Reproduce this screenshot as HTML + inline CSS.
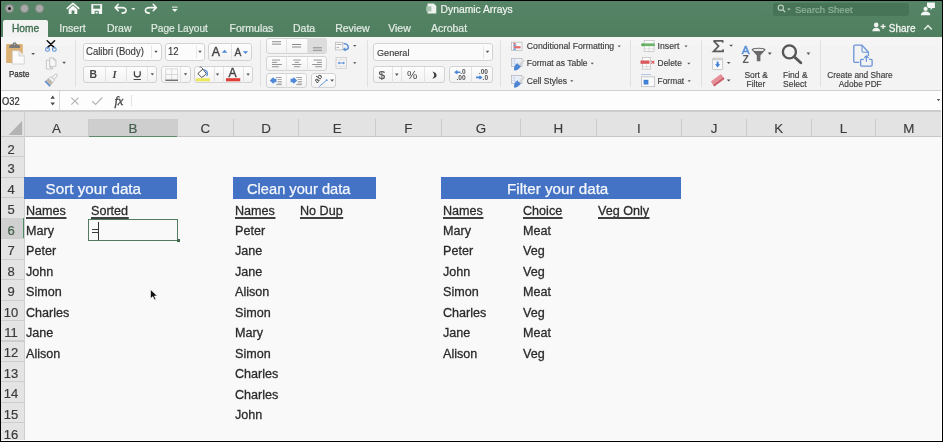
<!DOCTYPE html>
<html><head><meta charset="utf-8"><style>
*{margin:0;padding:0;box-sizing:border-box}
html,body{width:943px;height:442px;overflow:hidden;background:#f9f9f9;font-family:"Liberation Sans",sans-serif;position:relative}
.a{position:absolute}
.t{position:absolute;white-space:nowrap;line-height:normal}
.tab{position:absolute;top:22px;font-size:10.5px;color:#e2ebe4;white-space:nowrap;-webkit-text-stroke:0.2px currentColor}
.ch{position:absolute;font-size:13.4px;color:#3a3a3a;white-space:nowrap;-webkit-text-stroke:0.12px #3a3a3a}
.rn{position:absolute;left:0;width:22px;font-size:13px;color:#3a3a3a;-webkit-text-stroke:0.2px #3a3a3a;text-align:center;white-space:nowrap}
.c{position:absolute;font-size:13.7px;color:#2a2a2a;white-space:nowrap;line-height:15px;transform:scaleX(0.92);transform-origin:0 0;-webkit-text-stroke:0.3px #2a2a2a}
.u::after{content:'';position:absolute;left:-0.3px;right:-0.3px;top:13.6px;height:1.5px;background:#414141}
.band{position:absolute;top:177.3px;height:22px;background:#4472c4}
.bt{position:absolute;color:#f4f7fc;font-size:15.2px;line-height:17px;white-space:nowrap;-webkit-text-stroke:0.25px #f4f7fc;transform-origin:0 0}
.sl{position:absolute;font-size:8.5px;color:#3b3b3b;white-space:nowrap;line-height:10px;-webkit-text-stroke:0.15px #3b3b3b}
.btn{position:absolute;background:linear-gradient(#fdfdfd,#f3f3f3);border:1px solid #d3d3d3;border-radius:3px}
.sep{position:absolute;top:40px;width:1px;height:47px;background:#e0e0e0}
.dd{position:absolute;width:0;height:0;border-left:2.5px solid transparent;border-right:2.5px solid transparent;border-top:3px solid #4a4a4a}
svg{position:absolute;overflow:visible}
</style></head><body>
<div id="root" style="position:absolute;left:0;top:0;width:943px;height:442px;overflow:hidden;will-change:transform;background:#f9f9f9">
<div class="a" style="left:0;top:0;width:943px;height:37px;background:linear-gradient(#558566,#4f7f5f)"></div>
<div class="a" style="left:4.6px;top:4.1px;width:9.2px;height:9.2px;border-radius:50%;background:#a9a9a9;border:0.9px solid #858a86"></div>
<div class="a" style="left:19.799999999999997px;top:4.1px;width:9.2px;height:9.2px;border-radius:50%;background:#a9a9a9;border:0.9px solid #858a86"></div>
<div class="a" style="left:34.8px;top:4.1px;width:9.2px;height:9.2px;border-radius:50%;background:#a9a9a9;border:0.9px solid #858a86"></div>
<div class="a" style="left:7.6px;top:7.1px;width:3.2px;height:3.2px;border-radius:50%;background:#1a1a1a"></div>
<div class="t" style="left:440.6px;top:4.1px;font-size:10.3px;color:#f2f5f3;-webkit-text-stroke:0.2px #f2f5f3">Dynamic Arrays</div>
<div class="a" style="left:773px;top:3px;width:136px;height:12.5px;background:#477457;border-radius:3px"></div>
<div class="t" style="left:794.5px;top:3.6px;font-size:9.8px;color:#93b49e;-webkit-text-stroke:0.15px #93b49e;transform:scaleX(0.97);transform-origin:0 0">Search Sheet</div>
<div class="a" style="left:3px;top:20px;width:45px;height:17px;background:#f3f3f3;border-radius:2px 2px 0 0"></div>
<div class="tab" style="left:12px;color:#3d6e4e;transform:scaleX(0.97);transform-origin:0 0;-webkit-text-stroke:0.35px #3d6e4e;">Home</div>
<div class="tab" style="left:59.3px;color:#e2ebe4;">Insert</div>
<div class="tab" style="left:107px;color:#e2ebe4;">Draw</div>
<div class="tab" style="left:151.4px;color:#e2ebe4;transform:scaleX(0.965);transform-origin:0 0;">Page Layout</div>
<div class="tab" style="left:229.6px;color:#e2ebe4;">Formulas</div>
<div class="tab" style="left:293px;color:#e2ebe4;">Data</div>
<div class="tab" style="left:335.2px;color:#e2ebe4;">Review</div>
<div class="tab" style="left:388.2px;color:#e2ebe4;">View</div>
<div class="tab" style="left:430.9px;color:#e2ebe4;">Acrobat</div>
<div class="tab" style="left:888.8px;font-size:10px;top:22.5px;color:#f0f5f1;-webkit-text-stroke:0.3px #f0f5f1">Share</div>
<div class="a" style="left:0;top:37px;width:943px;height:54px;background:linear-gradient(#f5f5f5 0,#f5f5f5 9px,#f3f3f3 10px);border-bottom:1.8px solid #d0d0d0"></div>
<div class="sep" style="left:75.2px"></div>
<div class="sep" style="left:260px"></div>
<div class="sep" style="left:366.5px"></div>
<div class="sep" style="left:500px"></div>
<div class="sep" style="left:630.2px"></div>
<div class="sep" style="left:700.7px"></div>
<div class="sep" style="left:820.2px"></div>
<div class="btn" style="left:82.5px;top:43px;width:79px;height:17.6px;background:#fcfcfc"></div>
<div class="a" style="left:151px;top:46px;width:1px;height:12px;background:#e6e6e6"></div>
<div class="t" style="left:85.8px;top:45.8px;font-size:10.4px;color:#3a3a3a;transform:scaleX(0.92);transform-origin:0 0;-webkit-text-stroke:0.15px #3a3a3a">Calibri (Body)</div>
<div class="btn" style="left:165px;top:43px;width:39.6px;height:17.6px;background:#fcfcfc"></div>
<div class="a" style="left:195.5px;top:46px;width:1px;height:12px;background:#e6e6e6"></div>
<div class="t" style="left:168.4px;top:45.8px;font-size:10.4px;color:#3a3a3a;transform:scaleX(0.92);transform-origin:0 0;-webkit-text-stroke:0.15px #3a3a3a">12</div>
<div class="btn" style="left:208.4px;top:43px;width:44px;height:17.6px"></div>
<div class="a" style="left:230.5px;top:44px;width:1px;height:16px;background:#e3e3e3"></div>
<div class="btn" style="left:82.5px;top:66.2px;width:74px;height:17.2px"></div>
<div class="a" style="left:104.6px;top:67px;width:1px;height:16px;background:#e3e3e3"></div>
<div class="a" style="left:126.4px;top:67px;width:1px;height:16px;background:#e3e3e3"></div>
<div class="a" style="left:146.5px;top:67px;width:1px;height:16px;background:#e3e3e3"></div>
<div class="btn" style="left:160.6px;top:66.2px;width:30px;height:17.2px"></div>
<div class="a" style="left:179.8px;top:67px;width:1px;height:16px;background:#e3e3e3"></div>
<div class="btn" style="left:193.9px;top:66.2px;width:58.8px;height:17.2px"></div>
<div class="a" style="left:213.6px;top:67px;width:1px;height:16px;background:#e3e3e3"></div>
<div class="a" style="left:222.7px;top:67px;width:1px;height:16px;background:#e3e3e3"></div>
<div class="a" style="left:243.2px;top:67px;width:1px;height:16px;background:#e3e3e3"></div>
<div class="btn" style="left:265.8px;top:37.9px;width:61.7px;height:15.7px"></div>
<div class="a" style="left:307.2px;top:38.4px;width:20px;height:14.7px;background:#dcdcdc;border-radius:0 3px 3px 0"></div>
<div class="a" style="left:286px;top:38.5px;width:1px;height:14.5px;background:#e3e3e3"></div>
<div class="a" style="left:307.2px;top:38.5px;width:1px;height:14.5px;background:#e3e3e3"></div>
<div class="btn" style="left:265.8px;top:55.7px;width:61.7px;height:15.3px"></div>
<div class="a" style="left:286px;top:56.2px;width:1px;height:14.5px;background:#e3e3e3"></div>
<div class="a" style="left:307.2px;top:56.2px;width:1px;height:14.5px;background:#e3e3e3"></div>
<div class="btn" style="left:265.8px;top:73.3px;width:41.2px;height:14.9px"></div>
<div class="a" style="left:286px;top:73.8px;width:1px;height:14px;background:#e3e3e3"></div>
<div class="btn" style="left:311px;top:73.3px;width:25.4px;height:14.9px"></div>
<div class="btn" style="left:373.2px;top:42.8px;width:120.2px;height:17.8px;background:#fbfbfb"></div>
<div class="a" style="left:483px;top:45.5px;width:1px;height:13px;background:#e6e6e6"></div>
<div class="t" style="left:376.7px;top:46.6px;font-size:9.8px;color:#3a3a3a;-webkit-text-stroke:0.15px #3a3a3a;transform:scaleX(0.93);transform-origin:0 0">General</div>
<div class="btn" style="left:373.2px;top:66.1px;width:72px;height:17.4px"></div>
<div class="a" style="left:391.7px;top:67px;width:1px;height:16px;background:#e3e3e3"></div>
<div class="a" style="left:401.4px;top:67px;width:1px;height:16px;background:#e3e3e3"></div>
<div class="a" style="left:423.6px;top:67px;width:1px;height:16px;background:#e3e3e3"></div>
<div class="btn" style="left:449.3px;top:66.1px;width:43.7px;height:17.4px"></div>
<div class="a" style="left:471.1px;top:67px;width:1px;height:16px;background:#e3e3e3"></div>
<div class="sl" style="left:526.8px;top:41.2px;font-size:8.7px">Conditional Formatting</div>
<div class="sl" style="left:526.8px;top:58.4px;font-size:8.5px">Format as Table</div>
<div class="sl" style="left:526.8px;top:76px;font-size:8.5px">Cell Styles</div>
<div class="sl" style="left:657.6px;top:41.2px;font-size:8.7px">Insert</div>
<div class="sl" style="left:657.6px;top:58.4px;font-size:8.4px">Delete</div>
<div class="sl" style="left:657.6px;top:76px;font-size:8.4px">Format</div>
<div class="sl" style="left:744.4px;top:70px;font-size:8.5px">Sort &amp;</div>
<div class="sl" style="left:746.5px;top:78.6px;font-size:8.5px">Filter</div>
<div class="sl" style="left:783px;top:70px;font-size:8.5px">Find &amp;</div>
<div class="sl" style="left:783px;top:78.6px;font-size:8.5px">Select</div>
<div class="sl" style="left:827.2px;top:70px;font-size:8.3px">Create and Share</div>
<div class="sl" style="left:838.8px;top:78.6px;font-size:8.3px">Adobe PDF</div>
<div class="sl" style="left:8.8px;top:69.3px;font-size:8.3px;color:#333;-webkit-text-stroke:0.25px #333;transform:scaleX(0.96);transform-origin:0 0">Paste</div>
<div class="a" style="left:0;top:91px;width:943px;height:19px;background:#fdfdfd"></div>
<div class="t" style="left:2.3px;top:95.6px;font-size:10px;color:#2e2e2e;-webkit-text-stroke:0.2px #2e2e2e;transform:scaleX(0.93);transform-origin:0 0">O32</div>
<div class="a" style="left:59px;top:91px;width:1px;height:19px;background:#d9d9d9"></div>
<div class="a" style="left:131px;top:95px;width:1px;height:11px;background:#e2e2e2"></div>
<div class="a" style="left:0;top:110px;width:943px;height:27.2px;background:#e3e3e3;border-top:2.4px solid #cdcdcd;border-bottom:1.4px solid #c6c6c6"></div>
<svg style="left:0;top:0" width="943" height="442"><polygon points="8.6,134.9 22.2,120.8 22.2,134.9" fill="#b3b3b3"/></svg>
<div class="a" style="left:23.5px;top:111px;width:1px;height:330px;background:#cfcfcf"></div>
<div class="a" style="left:89.1px;top:118.6px;width:87.90000000000002px;height:18.2px;background:#cecece;border-bottom:1.3px solid #5a8a68"></div>
<div class="ch" style="left:36.4px;width:40px;text-align:center;top:121.4px;color:#3a3a3a">A</div>
<div class="a" style="left:88.3px;top:118.5px;width:1px;height:18.5px;background:#cbcbcb"></div>
<div class="ch" style="left:113.05000000000001px;width:40px;text-align:center;top:121.4px;color:#41614c">B</div>
<div class="a" style="left:176.8px;top:118.5px;width:1px;height:18.5px;background:#cbcbcb"></div>
<div class="ch" style="left:185.3px;width:40px;text-align:center;top:121.4px;color:#3a3a3a">C</div>
<div class="a" style="left:232.8px;top:118.5px;width:1px;height:18.5px;background:#cbcbcb"></div>
<div class="ch" style="left:246.0px;width:40px;text-align:center;top:121.4px;color:#3a3a3a">D</div>
<div class="a" style="left:298.2px;top:118.5px;width:1px;height:18.5px;background:#cbcbcb"></div>
<div class="ch" style="left:317.15px;width:40px;text-align:center;top:121.4px;color:#3a3a3a">E</div>
<div class="a" style="left:375.1px;top:118.5px;width:1px;height:18.5px;background:#cbcbcb"></div>
<div class="ch" style="left:388.45000000000005px;width:40px;text-align:center;top:121.4px;color:#3a3a3a">F</div>
<div class="a" style="left:440.8px;top:118.5px;width:1px;height:18.5px;background:#cbcbcb"></div>
<div class="ch" style="left:461.0px;width:40px;text-align:center;top:121.4px;color:#3a3a3a">G</div>
<div class="a" style="left:520.2px;top:118.5px;width:1px;height:18.5px;background:#cbcbcb"></div>
<div class="ch" style="left:538.35px;width:40px;text-align:center;top:121.4px;color:#3a3a3a">H</div>
<div class="a" style="left:595.5px;top:118.5px;width:1px;height:18.5px;background:#cbcbcb"></div>
<div class="ch" style="left:618.85px;width:40px;text-align:center;top:121.4px;color:#3a3a3a">I</div>
<div class="a" style="left:681.2px;top:118.5px;width:1px;height:18.5px;background:#cbcbcb"></div>
<div class="ch" style="left:694.0px;width:40px;text-align:center;top:121.4px;color:#3a3a3a">J</div>
<div class="a" style="left:745.8px;top:118.5px;width:1px;height:18.5px;background:#cbcbcb"></div>
<div class="ch" style="left:758.65px;width:40px;text-align:center;top:121.4px;color:#3a3a3a">K</div>
<div class="a" style="left:810.5px;top:118.5px;width:1px;height:18.5px;background:#cbcbcb"></div>
<div class="ch" style="left:823.45px;width:40px;text-align:center;top:121.4px;color:#3a3a3a">L</div>
<div class="a" style="left:875.4px;top:118.5px;width:1px;height:18.5px;background:#cbcbcb"></div>
<div class="ch" style="left:888.95px;width:40px;text-align:center;top:121.4px;color:#3a3a3a">M</div>
<div class="a" style="left:0;top:137px;width:23.5px;height:305px;background:#e4e4e4"></div>
<div class="a" style="left:0;top:156.4px;width:23.5px;height:1.1px;background:#cdcdcd"></div>
<div class="rn" style="top:141.70000000000002px;color:#3c3c3c">2</div>
<div class="a" style="left:0;top:176.85px;width:23.5px;height:1.1px;background:#cdcdcd"></div>
<div class="rn" style="top:161.4px;color:#3c3c3c">3</div>
<div class="a" style="left:0;top:197.3px;width:23.5px;height:1.1px;background:#cdcdcd"></div>
<div class="rn" style="top:181.85px;color:#3c3c3c">4</div>
<div class="a" style="left:0;top:217.75px;width:23.5px;height:1.1px;background:#cdcdcd"></div>
<div class="rn" style="top:202.3px;color:#3c3c3c">5</div>
<div class="a" style="left:0;top:218.35px;width:23.5px;height:20.45px;background:#d0d0d0"></div>
<div class="a" style="left:22.8px;top:218.35px;width:1.4px;height:20.45px;background:#4c8a5f"></div>
<div class="a" style="left:0;top:238.20000000000002px;width:23.5px;height:1.1px;background:#cdcdcd"></div>
<div class="rn" style="top:222.75px;color:#3f6e4e">6</div>
<div class="a" style="left:0;top:258.65px;width:23.5px;height:1.1px;background:#cdcdcd"></div>
<div class="rn" style="top:243.20000000000002px;color:#3c3c3c">7</div>
<div class="a" style="left:0;top:279.09999999999997px;width:23.5px;height:1.1px;background:#cdcdcd"></div>
<div class="rn" style="top:263.65px;color:#3c3c3c">8</div>
<div class="a" style="left:0;top:299.54999999999995px;width:23.5px;height:1.1px;background:#cdcdcd"></div>
<div class="rn" style="top:284.09999999999997px;color:#3c3c3c">9</div>
<div class="a" style="left:0;top:320.0px;width:23.5px;height:1.1px;background:#cdcdcd"></div>
<div class="rn" style="top:304.54999999999995px;color:#3c3c3c">10</div>
<div class="a" style="left:0;top:340.44999999999993px;width:23.5px;height:1.1px;background:#cdcdcd"></div>
<div class="rn" style="top:325.0px;color:#3c3c3c">11</div>
<div class="a" style="left:0;top:360.9px;width:23.5px;height:1.1px;background:#cdcdcd"></div>
<div class="rn" style="top:345.44999999999993px;color:#3c3c3c">12</div>
<div class="a" style="left:0;top:381.34999999999997px;width:23.5px;height:1.1px;background:#cdcdcd"></div>
<div class="rn" style="top:365.9px;color:#3c3c3c">13</div>
<div class="a" style="left:0;top:401.79999999999995px;width:23.5px;height:1.1px;background:#cdcdcd"></div>
<div class="rn" style="top:386.34999999999997px;color:#3c3c3c">14</div>
<div class="a" style="left:0;top:422.24999999999994px;width:23.5px;height:1.1px;background:#cdcdcd"></div>
<div class="rn" style="top:406.79999999999995px;color:#3c3c3c">15</div>
<div class="a" style="left:0;top:442.7px;width:23.5px;height:1.1px;background:#cdcdcd"></div>
<div class="rn" style="top:427.24999999999994px;color:#3c3c3c">16</div>
<div class="band" style="left:24px;width:153.3px"></div>
<div class="band" style="left:233.3px;width:142.3px"></div>
<div class="band" style="left:440.5px;width:240.5px"></div>
<div class="bt" style="left:45.6px;top:179.6px">Sort your data</div>
<div class="bt" style="left:247px;top:179.6px;transform:scaleX(0.965)">Clean your data</div>
<div class="bt" style="left:507px;top:179.6px">Filter your data</div>
<div class="c u" style="left:26.1px;top:203.45000000000002px;">Names</div>
<div class="c u" style="left:90.89999999999999px;top:203.45000000000002px;">Sorted</div>
<div class="c" style="left:26.1px;top:222.9px;">Mary</div>
<div class="c" style="left:26.1px;top:243.35000000000002px;">Peter</div>
<div class="c" style="left:26.1px;top:263.8px;">John</div>
<div class="c" style="left:26.1px;top:284.25px;">Simon</div>
<div class="c" style="left:26.1px;top:304.7px;">Charles</div>
<div class="c" style="left:26.1px;top:325.15000000000003px;">Jane</div>
<div class="c" style="left:26.1px;top:345.59999999999997px;">Alison</div>
<div class="c u" style="left:235.4px;top:203.45000000000002px;">Names</div>
<div class="c u" style="left:299.8px;top:203.45000000000002px;">No Dup</div>
<div class="c" style="left:235.4px;top:222.9px;">Peter</div>
<div class="c" style="left:235.4px;top:243.35000000000002px;">Jane</div>
<div class="c" style="left:235.4px;top:263.8px;">Jane</div>
<div class="c" style="left:235.4px;top:284.25px;">Alison</div>
<div class="c" style="left:235.4px;top:304.7px;">Simon</div>
<div class="c" style="left:235.4px;top:325.15000000000003px;">Mary</div>
<div class="c" style="left:235.4px;top:345.59999999999997px;">Simon</div>
<div class="c" style="left:235.4px;top:366.05px;">Charles</div>
<div class="c" style="left:235.4px;top:386.5px;">Charles</div>
<div class="c" style="left:235.4px;top:406.95px;">John</div>
<div class="c u" style="left:443.40000000000003px;top:203.45000000000002px;">Names</div>
<div class="c u" style="left:522.8000000000001px;top:203.45000000000002px;">Choice</div>
<div class="c u" style="left:598.1px;top:203.45000000000002px;">Veg Only</div>
<div class="c" style="left:443.40000000000003px;top:222.9px;">Mary</div>
<div class="c" style="left:443.40000000000003px;top:243.35000000000002px;">Peter</div>
<div class="c" style="left:443.40000000000003px;top:263.8px;">John</div>
<div class="c" style="left:443.40000000000003px;top:284.25px;">Simon</div>
<div class="c" style="left:443.40000000000003px;top:304.7px;">Charles</div>
<div class="c" style="left:443.40000000000003px;top:325.15000000000003px;">Jane</div>
<div class="c" style="left:443.40000000000003px;top:345.59999999999997px;">Alison</div>
<div class="c" style="left:522.8000000000001px;top:222.9px;">Meat</div>
<div class="c" style="left:522.8000000000001px;top:243.35000000000002px;">Veg</div>
<div class="c" style="left:522.8000000000001px;top:263.8px;">Veg</div>
<div class="c" style="left:522.8000000000001px;top:284.25px;">Meat</div>
<div class="c" style="left:522.8000000000001px;top:304.7px;">Veg</div>
<div class="c" style="left:522.8000000000001px;top:325.15000000000003px;">Meat</div>
<div class="c" style="left:522.8000000000001px;top:345.59999999999997px;">Veg</div>
<div class="a" style="left:88px;top:219px;width:90.20000000000002px;height:22.3px;border:1.8px solid #527c60"></div>
<div class="a" style="left:176.70000000000002px;top:238.8px;width:3px;height:3px;background:#3f6a4e"></div>
<div class="a" style="left:92.2px;top:229.2px;width:5.4px;height:1.3px;background:#3c3c3c"></div>
<div class="a" style="left:92.2px;top:232px;width:5.4px;height:1.3px;background:#3c3c3c"></div>
<div class="a" style="left:98.1px;top:221.8px;width:1.3px;height:18px;background:#333"></div>
<svg style="left:150.2px;top:289.2px" width="10" height="14"><path d="M0.5,0.5 L0.5,9.5 L2.8,7.6 L4.6,11 L6,10.3 L4.3,7 L7.3,7 Z" fill="#111" stroke="#fff" stroke-width="0.6"/></svg>

<svg style="left:0;top:0" width="943" height="442" viewBox="0 0 943 442">
<!-- title bar icons -->
<g fill="none" stroke="#f4f7f5" stroke-width="1.55" stroke-linecap="round" stroke-linejoin="round">
  <path d="M67.2,8.4 L73,3.3 L78.8,8.4"/>
  <path d="M115.2,7.6 L118.3,4.3 M115.2,7.6 L118.3,10.8 M115.5,7.6 L122,7.6 C125.6,7.6 126.3,9.5 126.1,10.6 C125.9,12.2 124.5,13.1 122.2,13.1"/>
  <path d="M156.3,7.6 L153.2,4.3 M156.3,7.6 L153.2,10.8 M156,7.6 L149.5,7.6 C145.9,7.6 145.2,9.5 145.4,10.6 C145.6,12.2 147,13.1 149.3,13.1"/>
</g>
<path d="M68.7,13.9 L68.7,9.2 L73,5.4 L77.3,9.2 L77.3,13.9 L74.4,13.9 L74.4,10.6 L71.6,10.6 L71.6,13.9 Z" fill="#f4f7f5"/>
<path d="M91.3,3.9 L101.6,3.9 Q102.1,3.9 102.1,4.4 L102.1,13.4 Q102.1,13.9 101.6,13.9 L91.8,13.9 Q91.3,13.9 91.3,13.4 Z" fill="#f4f7f5"/>
<rect x="93.3" y="4.9" width="6.8" height="3.8" fill="#528262"/>
<rect x="93.3" y="4.9" width="6.8" height="0.9" fill="#9db5a3"/>
<path d="M94.6,13.9 L94.6,11.8 Q94.6,10.8 95.6,10.8 L97.8,10.8 Q98.8,10.8 98.8,11.8 L98.8,13.9 Z" fill="#528262"/>
<rect x="95.6" y="11.8" width="2.2" height="1.6" fill="#f4f7f5"/>
<path d="M131.3,7.9 L135.3,7.9 L133.3,10.3 Z" fill="#e6eee8"/>
<rect x="172" y="6.6" width="5.6" height="1" fill="#f4f7f5"/>
<path d="M172,8.9 L177.6,8.9 L174.8,12 Z" fill="#f4f7f5"/>
<!-- doc icon in title -->
<path d="M427.5,3.4 L433.8,3.4 L436.3,5.9 L436.3,13.6 L427.5,13.6 Z" fill="#eef3ef"/>
<rect x="426.2" y="6.3" width="5.2" height="5.2" fill="#a9c3b1"/>
<!-- search magnifier -->
<circle cx="780.8" cy="7.7" r="2.6" fill="none" stroke="#b7cdbe" stroke-width="1.2"/>
<path d="M782.7,9.6 L784.8,11.7" stroke="#b7cdbe" stroke-width="1.3" stroke-linecap="round"/>
<path d="M787.2,8.6 L790.6,8.6 L788.9,10.4 Z" fill="#b7cdbe"/>
<!-- person + bubble -->
<path d="M927,2.4 L934.9,2.4 L934.9,8 L932.6,8 L930.6,10.2 L930.6,8 L927,8 Z" fill="#f4f7f5"/>
<circle cx="925.6" cy="8.9" r="2.5" fill="#f4f7f5" stroke="#528262" stroke-width="0.8"/>
<path d="M920.8,15.2 Q921.2,11.6 925.6,11.6 Q930,11.6 930.4,15.2 Z" fill="#f4f7f5"/>
<!-- share icon -->
<circle cx="876.2" cy="24.9" r="2.3" fill="#eef3ef"/>
<path d="M872.3,31.2 Q872.6,27.7 876.2,27.7 Q879.8,27.7 880.1,31.2 Z" fill="#eef3ef"/>
<path d="M880.6,26.5 L885.6,26.5 M883.1,24 L883.1,29" stroke="#eef3ef" stroke-width="1.3"/>
<path d="M924.2,29.4 L928,25.6 L931.8,29.4" fill="none" stroke="#eef3ef" stroke-width="1.4"/>

<!-- ===== clipboard group ===== -->
<rect x="6.1" y="44.1" width="16.7" height="19" rx="1.2" fill="#dcb072"/>
<path d="M9.2,47.9 L20,47.9 L20,46.2 Q20,45.2 18.6,45 L16.8,44.6 Q16.5,42.3 14.6,42.3 Q12.7,42.3 12.4,44.6 L10.6,45 Q9.2,45.2 9.2,46.2 Z" fill="#7a7a7a"/>
<circle cx="14.6" cy="44.3" r="0.7" fill="#c9c9c9"/>
<path d="M12.3,50.7 L19,50.7 L24.3,56 L24.3,64 L12.3,64 Z" fill="#fbfbfb" stroke="#c9c9c9" stroke-width="0.7"/>
<path d="M19,50.7 L19,56 L24.3,56" fill="#ececec" stroke="#c9c9c9" stroke-width="0.7"/>
<!-- scissors -->
<path d="M47.2,40.8 L54.3,47.6 M54.6,40.8 L47.5,47.6" stroke="#111" stroke-width="1.5" stroke-linecap="round"/>
<circle cx="47.5" cy="49.4" r="1.9" fill="none" stroke="#5a8fd8" stroke-width="1.1"/>
<circle cx="54.3" cy="49.4" r="1.9" fill="none" stroke="#5a8fd8" stroke-width="1.1"/>
<!-- copy -->
<path d="M46.4,60.2 L50,60.2 L50,67.8 L52.6,67.8 L52.6,69 L46.4,69 Z" fill="#f7f7f7" stroke="#b5b5b5" stroke-width="0.7"/>
<path d="M49.7,57.9 L53.6,57.9 L55.9,60.2 L55.9,66.4 L49.7,66.4 Z" fill="#f7f7f7" stroke="#b5b5b5" stroke-width="0.7"/>
<path d="M53.6,57.9 L53.6,60.2 L55.9,60.2" fill="none" stroke="#b5b5b5" stroke-width="0.6"/>
<!-- format painter -->
<g transform="translate(51.8,79.5) rotate(-44)">
  <path d="M-6.6,-3.6 L-5,-3.6 L-5,3.6 L-6.6,3.6 Z" fill="#4f86d6"/>
  <path d="M-5,-3.5 L-1.4,-3.2 L-1.4,3.2 L-5,3.5 Z" fill="#bfb8a8"/>
  <path d="M-1.4,-3 L1.6,-2.4 L1.6,2.4 L-1.4,3 Z" fill="#f4f4f4" stroke="#a8a8a8" stroke-width="0.5"/>
  <path d="M1.6,-1.4 L6.6,-1.2 Q7.6,0 6.6,1.2 L1.6,1.4 Z" fill="#fafafa" stroke="#9a9a9a" stroke-width="0.6"/>
</g>

<!-- ===== font group ===== -->
<g fill="#444" font-family="Liberation Sans" >
  <text x="211.7" y="55.5" font-size="12.4px" stroke="#444" stroke-width="0.4">A</text>
  <text x="234.5" y="55.5" font-size="10.2px" stroke="#444" stroke-width="0.35">A</text>
  <text x="89.6" y="78.2" font-size="10.4px" font-weight="bold">B</text>
  <text x="112.4" y="78.2" font-size="10.4px" font-weight="bold" font-style="italic" font-family="Liberation Serif">I</text>
  <text x="228.4" y="77.2" font-size="12.2px" stroke="#444" stroke-width="0.35">A</text>
  <text x="378.4" y="79.2" font-size="11.8px" fill="#505050" stroke="#505050" stroke-width="0.2">$</text>
  <text x="407" y="78.8" font-size="11.6px" fill="#4a4a4a">%</text>
</g>
<path d="M221.8,52.8 L224.6,49.8 L227.4,52.8 Z" fill="#4f88d8"/>
<path d="M242.8,51.2 L248.2,51.2 L245.5,54.1 Z" fill="#4f88d8"/>
<path d="M134.4,71.3 L134.4,74.6 Q134.4,77 137.3,77 Q140.2,77 140.2,74.6 L140.2,71.3" fill="none" stroke="#444" stroke-width="1.3"/>
<rect x="133.6" y="79" width="7.3" height="1" fill="#444"/>
<!-- borders -->
<g stroke="#cfcfcf" stroke-width="0.8" fill="none">
  <rect x="165.7" y="68.9" width="12" height="11.2"/>
  <path d="M171.7,68.9 L171.7,80.1 M165.7,74.5 L177.7,74.5"/>
</g>
<rect x="165.4" y="79.7" width="12.6" height="1.1" fill="#555"/>
<!-- fill color -->
<g transform="translate(201.8,73) rotate(-42)">
  <path d="M-3.4,-2.2 L3.4,-2.2 L3,3.2 Q0,4.2 -3,3.2 Z" fill="#fff" stroke="#4a4a4a" stroke-width="0.9"/>
</g>
<path d="M199.6,67.4 Q200.6,66.4 201.8,67.6 L203.2,69.4" fill="none" stroke="#4a4a4a" stroke-width="0.8"/>
<path d="M203.6,69.6 Q207.6,70.4 207.4,74.2 Q207.2,75.6 206.4,76" fill="none" stroke="#5a8fd8" stroke-width="1.3"/>
<rect x="195.8" y="78.3" width="14.1" height="3" fill="#ece65a"/>
<rect x="226" y="78.2" width="14.2" height="3.1" fill="#e03b35"/>

<!-- dropdown arrows for font group -->
<g fill="#555">
  <path d="M150.7,73.3 L154,73.3 L152.35,75.6 Z"/>
  <path d="M183.9,73.3 L187.2,73.3 L185.55,75.6 Z"/>
  <path d="M215.8,73.4 L219.2,73.4 L217.5,75.7 Z"/>
  <path d="M246.4,73.4 L249.8,73.4 L248.1,75.7 Z"/>
  <path d="M395,73.6 L398.6,73.6 L396.8,75.9 Z"/>
  <path d="M330.3,79.5 L334,79.5 L332.15,81.8 Z"/>
  <path d="M353,44.9 L356.5,44.9 L354.75,46.7 Z"/>
  <path d="M353,62.2 L356.5,62.2 L354.75,64 Z"/>
  <path d="M729.2,44.8 L733,44.8 L731.1,46.8 Z"/>
  <path d="M726.8,62.1 L730.6,62.1 L728.7,64.1 Z"/>
  <path d="M726.8,79.4 L730.6,79.4 L728.7,81.5 Z"/>
  <path d="M767.9,52.6 L771.7,52.6 L769.8,54.9 Z"/>
  <path d="M806.5,52.6 L810.3,52.6 L808.4,54.9 Z"/>
  <path d="M31.2,52.9 L35,52.9 L33.1,55 Z"/>
  <path d="M154.3,50.8 L157.7,50.8 L156,53 Z"/>
  <path d="M198.3,50.8 L201.7,50.8 L200,53 Z"/>
  <path d="M485.7,50.8 L489.3,50.8 L487.5,53 Z"/>
  <path d="M62.3,61.7 L65.9,61.7 L64.1,64 Z"/>
</g>

<!-- ===== alignment ===== -->
<g fill="#8a8a8a">
  <rect x="272" y="41.2" width="9" height="1"/><rect x="272" y="43.6" width="9" height="1"/>
  <rect x="292.1" y="44" width="9" height="1"/><rect x="292.1" y="46.5" width="9" height="1"/>
  <rect x="312.9" y="47.3" width="9" height="1"/><rect x="312.9" y="49.8" width="9" height="1"/>
  <rect x="272" y="59.6" width="8.1" height="0.9"/><rect x="272" y="61.9" width="5" height="0.9"/><rect x="272" y="64.1" width="9.8" height="0.9"/><rect x="272" y="66.3" width="6.7" height="0.9"/>
  <rect x="293.2" y="59.6" width="7.5" height="0.9"/><rect x="294.8" y="61.9" width="4.2" height="0.9"/><rect x="292.1" y="64.1" width="9.2" height="0.9"/><rect x="294" y="66.3" width="5.9" height="0.9"/>
  <rect x="313.7" y="59.6" width="8.2" height="0.9"/><rect x="317" y="61.9" width="4.9" height="0.9"/><rect x="312.1" y="64.1" width="9.8" height="0.9"/><rect x="315.3" y="66.3" width="6.6" height="0.9"/>
</g>
<!-- indents -->
<g fill="#8a8a8a">
  <rect x="276.1" y="77" width="5.6" height="0.8"/><rect x="277.6" y="79" width="4.1" height="0.7"/><rect x="277.6" y="81" width="4.1" height="0.7"/><rect x="277.6" y="82.7" width="4.1" height="0.7"/><rect x="276.1" y="84.3" width="5.6" height="0.8"/>
  <rect x="296.2" y="77" width="5.7" height="0.8"/><rect x="297.7" y="79" width="4.2" height="0.7"/><rect x="297.7" y="81" width="4.2" height="0.7"/><rect x="297.7" y="82.7" width="4.2" height="0.7"/><rect x="296.2" y="84.3" width="5.7" height="0.8"/>
</g>
<path d="M269.8,80.5 L273.2,77.2 L274.4,78.8 L276.4,78.8 L276.4,82.2 L274.4,82.2 L273.2,83.8 Z" fill="#4f88d8"/>
<path d="M297.2,80.5 L293.8,77.2 L292.6,78.8 L290.6,78.8 L290.6,82.2 L292.6,82.2 L293.8,83.8 Z" fill="#4f88d8"/>
<!-- orientation -->
<text x="0" y="0" font-family="Liberation Sans" font-size="7.5px" font-weight="bold" fill="#555" transform="translate(317.5,83.5) rotate(-55)">ab</text>
<path d="M319.2,86.5 L326.6,80.3" stroke="#5a8fd8" stroke-width="0.9"/>
<circle cx="326.7" cy="80.2" r="0.9" fill="#5a8fd8"/>
<!-- wrap -->
<rect x="335.3" y="42.3" width="7.5" height="7.6" fill="#f7f7f7" stroke="#b3b3b3" stroke-width="0.7"/>
<rect x="336.5" y="44.3" width="5" height="0.7" fill="#999"/><rect x="336.5" y="47.3" width="2.5" height="0.7" fill="#999"/>
<path d="M343.5,43.6 Q348.6,44 348.3,47.6 Q347.8,50 344.6,49.6" fill="none" stroke="#5a8fd8" stroke-width="1.5"/>
<path d="M342.6,49.5 L345.3,47.2 L345.6,51.4 Z" fill="#5a8fd8"/>
<!-- merge -->
<rect x="336" y="57.6" width="10.5" height="10.8" fill="#f7f7f7" stroke="#c7c7c7" stroke-width="0.7"/>
<path d="M336,59.8 L346.5,59.8 M336,66.2 L346.5,66.2 M341.25,57.6 L341.25,59.8 M341.25,66.2 L341.25,68.4" stroke="#d3d3d3" stroke-width="0.6"/>
<path d="M338.7,63 L344,63" stroke="#5a8fd8" stroke-width="1"/>
<path d="M337.6,63 L339.6,61.5 L339.6,64.5 Z M345.1,63 L343.1,61.5 L343.1,64.5 Z" fill="#5a8fd8"/>

<!-- ===== number ===== -->
<path d="M432.4,71.5 Q436.8,72.5 436.6,75.6 Q436.2,78.1 432.3,78.6 Q434.4,76.6 434.2,75 Q434,73.4 432.4,71.5 Z" fill="#3e3e3e"/>
<g font-family="Liberation Sans" font-size="6.6px" font-weight="bold" fill="#505050">
  <text x="460.2" y="74.4">.0</text>
  <text x="456.4" y="79.8">.00</text>
  <text x="478.8" y="74.4">.00</text>
  <text x="482.6" y="79.8">.0</text>
</g>
<path d="M454.1,72.2 L456.9,70.2 L457.9,71.4 L460.4,71.4 L460.4,73 L457.9,73 L456.9,74.2 Z" fill="#4a85d8"/>
<path d="M482.7,77.4 L479.9,75.4 L478.9,76.6 L476,76.6 L476,78.2 L478.9,78.2 L479.9,79.4 Z" fill="#4a85d8"/>
<!-- ===== styles ===== -->
<rect x="511.6" y="42.2" width="10.4" height="8.2" fill="#fafafa" stroke="#b5b5b5" stroke-width="0.7"/>
<rect x="513.4" y="42.8" width="2.2" height="1.8" fill="#e06060"/>
<rect x="513.2" y="44.6" width="3.2" height="1.6" fill="#7aa4e0"/>
<rect x="513.6" y="46.2" width="7" height="2.2" fill="#e36a6a"/>
<rect x="513.2" y="48.4" width="2.8" height="1.6" fill="#7aa4e0"/>
<g>
  <rect x="511.5" y="58.4" width="10.4" height="8" fill="#e9f0fa" stroke="#aeb3ba" stroke-width="0.7"/>
  <path d="M511.5,60.9 L516,60.9 M511.5,63.4 L516,63.4 M514.5,58.4 L514.5,66.4" stroke="#c3cfe0" stroke-width="0.5"/>
  <g transform="translate(519.6,64.2) rotate(-47)">
    <path d="M-8.2,0.4 Q-6.5,-2.6 -2.5,-2.6 L-0.6,-2.4 L-0.6,2.4 L-3,2.6 Q-6.8,2.6 -8.2,0.4 Z" fill="#4d84d4"/>
    <path d="M-0.8,-2 L6.2,-1.1 Q7.2,0 6.2,1.1 L-0.8,2 Z" fill="#cfcfcf"/>
    <path d="M-0.8,-2 L6.2,-1.1 L6.2,0 L-0.8,0 Z" fill="#e9e9e9"/>
  </g>
</g>
<g transform="translate(0,17.2)">
  <rect x="511.5" y="58.4" width="10.4" height="8" fill="#e9f0fa" stroke="#aeb3ba" stroke-width="0.7"/>
  <path d="M511.5,60.9 L516,60.9 M511.5,63.4 L516,63.4 M514.5,58.4 L514.5,66.4" stroke="#c3cfe0" stroke-width="0.5"/>
  <g transform="translate(519.6,64.2) rotate(-47)">
    <path d="M-8.2,0.4 Q-6.5,-2.6 -2.5,-2.6 L-0.6,-2.4 L-0.6,2.4 L-3,2.6 Q-6.8,2.6 -8.2,0.4 Z" fill="#4d84d4"/>
    <path d="M-0.8,-2 L6.2,-1.1 Q7.2,0 6.2,1.1 L-0.8,2 Z" fill="#cfcfcf"/>
    <path d="M-0.8,-2 L6.2,-1.1 L6.2,0 L-0.8,0 Z" fill="#e9e9e9"/>
  </g>
</g>
<g fill="#555">
  <path d="M617.6,45.4 L620.8,45.4 L619.2,47.2 Z"/>
  <path d="M590.6,62.8 L593.8,62.8 L592.2,64.6 Z"/>
  <path d="M570.2,80.3 L573.4,80.3 L571.8,82.1 Z"/>
  <path d="M684.4,45.4 L687.6,45.4 L686,47.2 Z"/>
  <path d="M687.2,62.8 L690.4,62.8 L688.8,64.6 Z"/>
  <path d="M687.6,80.3 L690.8,80.3 L689.2,82.1 Z"/>
</g>

<!-- ===== cells ===== -->
<rect x="644.2" y="40.6" width="9.8" height="10.8" fill="#fafafa" stroke="#bdbdbd" stroke-width="0.7"/>
<path d="M649.1,46.2 L649.1,51.4 M644.2,48.8 L654,48.8" stroke="#cfcfcf" stroke-width="0.6"/>
<rect x="643" y="43.4" width="11.8" height="2.7" fill="#6ab46a"/>
<circle cx="642.6" cy="44.75" r="1.5" fill="#5aa85a"/>
<rect x="642.6" y="57.5" width="8" height="11.6" fill="#fafafa" stroke="#bdbdbd" stroke-width="0.7"/>
<path d="M646.6,64 L646.6,69.1 M642.6,66.5 L650.6,66.5" stroke="#cfcfcf" stroke-width="0.6"/>
<rect x="640.5" y="60.5" width="9" height="3.3" fill="#d9575d"/>
<path d="M651.3,60.8 L654.3,63.6 M654.3,60.8 L651.3,63.6" stroke="#d9575d" stroke-width="1.1"/>
<rect x="641.4" y="76.9" width="13.3" height="9.8" fill="#fafafa" stroke="#b5b5b5" stroke-width="0.7"/>
<rect x="643.6" y="79.8" width="4.8" height="4.7" fill="#3f7fd6"/>
<path d="M641.4,74.6 L651.4,74.6" stroke="#5a8fd8" stroke-width="0.7" stroke-dasharray="1.3,0.7"/>

<!-- ===== editing ===== -->
<path d="M713.4,40.8 L722.6,40.8 L722.8,42.6 M713.6,40.8 L718.6,46.1 L713.6,51.3 L723,51.3 L723.2,49.4" fill="none" stroke="#5a5a5a" stroke-width="1.7" stroke-linejoin="miter"/>
<rect x="712.6" y="58.2" width="10" height="11.4" rx="0.6" fill="#fafafa" stroke="#b8b8b8" stroke-width="0.7"/>
<rect x="712.6" y="58.2" width="10" height="2.1" fill="#cfcfcf"/>
<path d="M717.6,61.6 L717.6,65" stroke="#3f7fd6" stroke-width="2"/>
<path d="M715,64.3 L720.2,64.3 L717.6,67.4 Z" fill="#3f7fd6"/>
<g transform="translate(717.6,80.2) rotate(-36)">
  <rect x="-6.4" y="-3" width="12.8" height="6" rx="1" fill="#e68f97"/>
  <rect x="-6.4" y="1.2" width="12.8" height="1.8" fill="#c65f6b"/>
</g>
<!-- sort -->
<text x="741.8" y="53.7" font-family="Liberation Sans" font-size="11.8px" fill="#5a8fd8" stroke="#5a8fd8" stroke-width="0.5">A</text>
<text x="742.6" y="63.2" font-family="Liberation Sans" font-size="10.4px" font-weight="bold" fill="#5c5c5c">Z</text>
<path d="M751.6,49.8 Q751.6,47.8 758.6,47.8 Q765.6,47.8 765.6,49.8 L760.4,55.6 L760.4,61.3 L756.8,61.3 L756.8,55.6 Z" fill="#6a6a6a"/>
<ellipse cx="758.6" cy="49.9" rx="5.4" ry="1.2" fill="#eaeaea"/>
<!-- find -->
<circle cx="789.4" cy="51.9" r="6.5" fill="none" stroke="#555" stroke-width="2.3"/>
<path d="M794.2,56.8 L800.8,62.8" stroke="#555" stroke-width="2.9" stroke-linecap="round"/>
<!-- adobe -->
<path d="M859.2,62.4 L855,62.4 Q853.8,62.4 853.8,61.2 L853.8,46.3 Q853.8,45.1 855,45.1 L862,45.1 L868.4,52.2 L868.4,56" fill="none" stroke="#6a93d8" stroke-width="1.3" stroke-linejoin="round"/>
<path d="M862,45.1 L862,51 Q862,52.2 863.2,52.2 L868.4,52.2" fill="none" stroke="#6a93d8" stroke-width="1.1"/>
<path d="M863.8,59.4 L861.6,59.4 Q860.6,59.4 860.6,60.4 L860.6,65.1 Q860.6,66.1 861.6,66.1 L871.1,66.1 Q872.1,66.1 872.1,65.1 L872.1,60.4 Q872.1,59.4 871.1,59.4 L869,59.4" fill="none" stroke="#6a93d8" stroke-width="1.3"/>
<path d="M866.4,61.7 L866.4,56.2 M864.3,58 L866.4,55.8 L868.5,58" fill="none" stroke="#6a93d8" stroke-width="1.2"/>

<!-- ===== formula bar ===== -->
<path d="M50.5,98.8 L52.7,95.4 L54.9,98.8 Z M50.5,102.4 L54.9,102.4 L52.7,105.6 Z" fill="#4a4a4a"/>
<path d="M71.3,97.6 L78.5,104.6 M78.5,97.6 L71.3,104.6" stroke="#b5b5b5" stroke-width="1.2"/>
<path d="M92.2,101.2 L95.6,104.5 L102.2,97.5" fill="none" stroke="#b5b5b5" stroke-width="1.2"/>
<text x="114.4" y="104.8" font-family="Liberation Serif" font-style="italic" font-size="12.5px" fill="#4a4a4a" stroke="#4a4a4a" stroke-width="0.35">fx</text>
<path d="M936.8,99 L940.2,99 L938.5,101.2 Z" fill="#555"/>
</svg>

<div class="a" style="left:0;top:0;width:943px;height:1px;background:#000"></div>
<div class="a" style="left:0;top:0;width:1px;height:442px;background:#000"></div>
<div class="a" style="left:942px;top:0;width:1px;height:442px;background:#000"></div>
<div class="a" style="left:0;top:441px;width:943px;height:1px;background:#000"></div>
<div class="a" style="left:941px;top:37px;width:1px;height:404px;background:#fdfdfd"></div>
<div class="a" style="left:1px;top:440px;width:941px;height:1px;background:#fdfdfd"></div>
<div class="a" style="left:942px;top:0;width:1px;height:442px;background:#000"></div>
<div class="a" style="left:0;top:441px;width:943px;height:1px;background:#000"></div>
</div></body></html>
